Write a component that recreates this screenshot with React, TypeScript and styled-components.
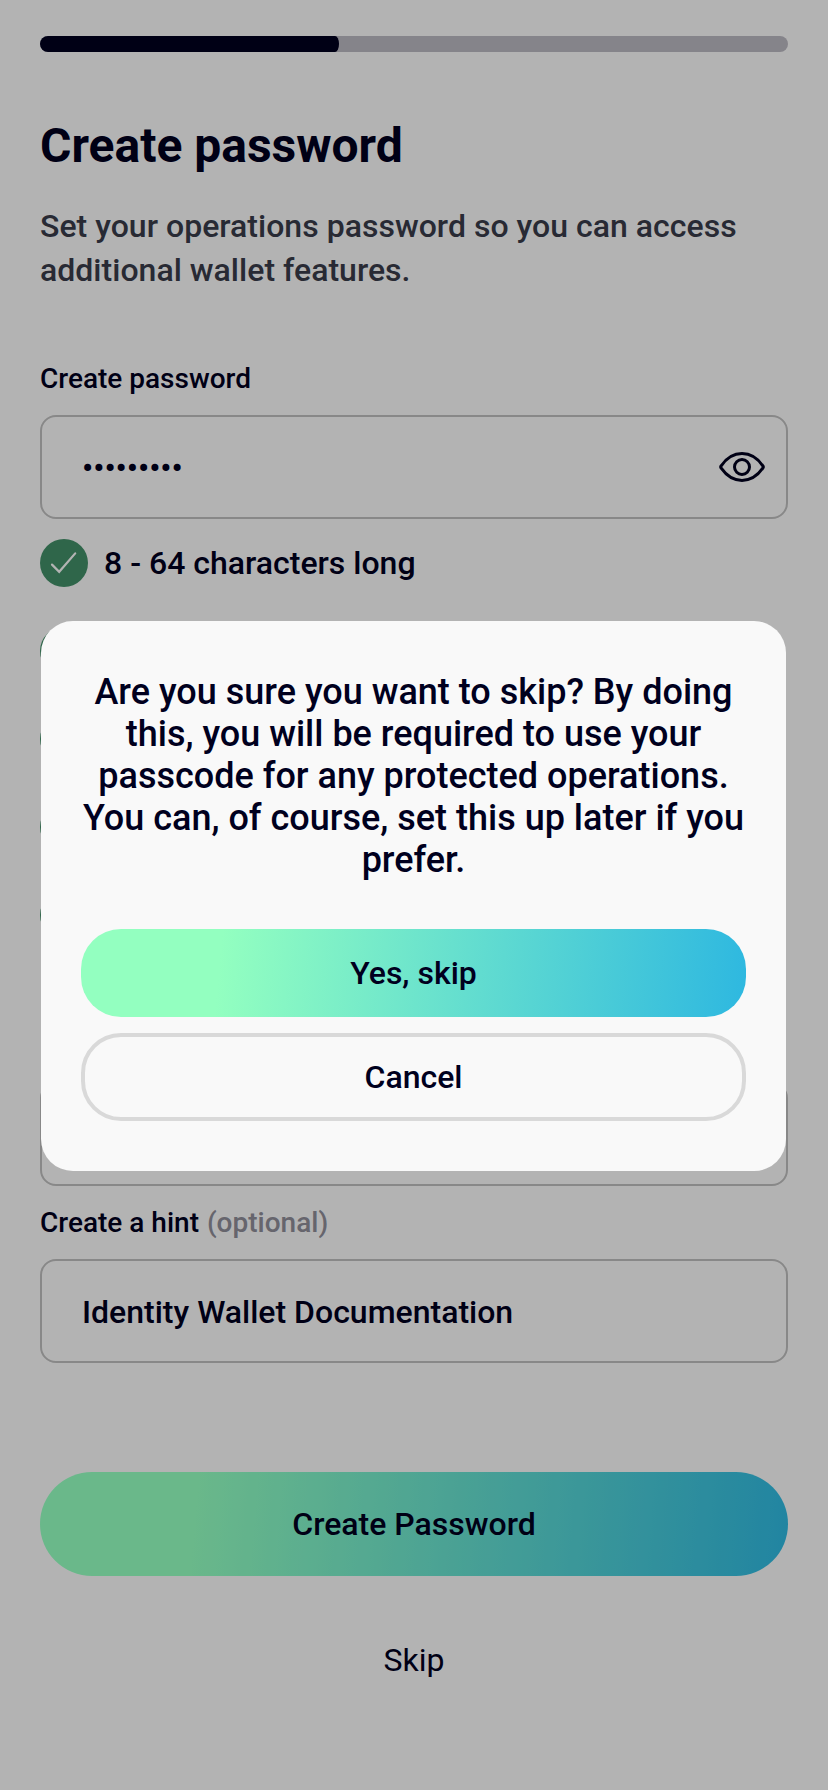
import React from 'react';
import styled, { createGlobalStyle } from 'styled-components';

const GlobalStyle = createGlobalStyle`
  *, *::before, *::after { box-sizing: border-box; }
  body { margin: 0; background: #f9f9f9; font-family: Roboto, "Liberation Sans", sans-serif; color: #00001e; }
  button { font-family: inherit; color: inherit; cursor: pointer; padding: 0; }
`;

const Screen = styled.main`
  height: 1790px;
  padding: 36px 40px 0;
  display: flex;
  flex-direction: column;
  overflow: hidden;
`;

const ProgressTrack = styled.div`
  height: 16px;
  flex-shrink: 0;
  border-radius: 8px;
  background: #b9b7c0;
  overflow: hidden;
`;

const ProgressFill = styled.div<{ $percent: number }>`
  width: ${(p) => p.$percent}%;
  height: 100%;
  border-radius: 0 4px 4px 0 / 0 8px 8px 0;
  background: #00001e;
`;

const Title = styled.h1`
  margin: 66px 0 0;
  font-size: 48px;
  line-height: 56px;
  font-weight: 700;
`;

const Subtitle = styled.p`
  margin: 30px 0 0;
  font-size: 32px;
  line-height: 44px;
  font-weight: 500;
  letter-spacing: 0.02px;
  color: #383b49;
`;

const Field = styled.div<{ $top: number }>`
  margin-top: ${(p) => p.$top}px;
  display: flex;
  flex-direction: column;
  gap: 20px;
`;

const Label = styled.label`
  min-height: 33px;
  font-size: 28px;
  line-height: 33px;
  font-weight: 500;
`;

const Optional = styled.span`
  margin-left: 1px;
  color: #8e8c97;
`;

const InputBox = styled.div`
  height: 104px;
  padding: 0 21px 0 40px;
  border: 2px solid #bdbdbd;
  border-radius: 16px;
  display: flex;
  align-items: center;
  justify-content: space-between;
  font-size: 32px;
  font-weight: 500;
`;

const InputValue = styled.span`
  padding-top: 2px;
`;

const Rules = styled.ul`
  list-style: none;
  margin: 20px 0 0;
  padding: 0;
  display: flex;
  flex-direction: column;
  gap: 40px;
`;

const Rule = styled.li`
  height: 48px;
  display: flex;
  align-items: center;
  gap: 16px;
  font-size: 32px;
  font-weight: 500;
`;

const PillButton = styled.button<{ $kind: 'primary' | 'outline'; $height: number }>`
  height: ${(p) => p.$height}px;
  flex-shrink: 0;
  border-radius: ${(p) => (p.$height > 90 ? 52 : 40)}px;
  border: ${(p) => (p.$kind === 'outline' ? '4px solid #d9d9d9' : 'none')};
  background: ${(p) =>
    p.$kind === 'primary'
      ? 'linear-gradient(95deg, #93ffc0 21%, #2eb8e0 100%)'
      : 'transparent'};
  font-size: 32px;
  font-weight: 500;
`;

const SubmitArea = styled.div`
  margin-top: 109px;
  display: flex;
  flex-direction: column;
`;

const SkipButton = styled.button`
  margin-top: 64px;
  align-self: center;
  border: none;
  background: none;
  font-size: 32px;
  line-height: 40px;
  font-weight: 400;
`;

const Overlay = styled.div`
  position: fixed;
  inset: 0;
  padding: 621px 42px 0 41px;
  background: rgba(0, 0, 0, 0.277);
`;

const Dialog = styled.section`
  height: 550px;
  padding: 50px 40px;
  border-radius: 32px;
  background: #f9f9f9;
  display: flex;
  flex-direction: column;
  justify-content: space-between;
`;

const Message = styled.p`
  margin: 0;
  text-align: center;
  font-size: 36px;
  line-height: 42px;
  font-weight: 500;
`;

const Actions = styled.div`
  display: flex;
  flex-direction: column;
  gap: 16px;
`;

const EyeIcon = () => (
  <svg width="46" height="32" viewBox="0 0 46 32" fill="none" stroke="#00001e" strokeWidth="3">
    <path d="M2.2 17.2Q1.2 16 2.2 14.8C7.5 7.2 14.5 2.6 23 2.6S38.5 7.2 43.8 14.8Q44.8 16 43.8 17.2C38.5 24.8 31.5 29.4 23 29.4S7.5 24.8 2.2 17.2Z" />
    <circle cx="23" cy="16" r="7.5" />
  </svg>
);

const CheckIcon = () => (
  <svg width="48" height="48" viewBox="0 0 48 48" fill="none">
    <circle cx="24" cy="24" r="24" fill="#428e67" />
    <path d="M12 25.6L19.2 32.8L35.2 14.4" stroke="#f9f9f9" strokeWidth="2.2" strokeLinecap="round" />
  </svg>
);

const rules = ['8 - 64 characters long', '', '', '', ''];

export default function App() {
  return (
    <>
      <GlobalStyle />
      <Screen>
        <ProgressTrack>
          <ProgressFill $percent={40} />
        </ProgressTrack>
        <Title>Create password</Title>
        <Subtitle>Set your operations password so you can access additional wallet features.</Subtitle>
        <Field $top={70}>
          <Label>Create password</Label>
          <InputBox>
            <InputValue>•••••••••</InputValue>
            <EyeIcon />
          </InputBox>
        </Field>
        <Rules>
          {rules.map((rule, index) => (
            <Rule key={index}>
              <CheckIcon />
              {rule}
            </Rule>
          ))}
        </Rules>
        <Field $top={90}>
          <Label />
          <InputBox />
        </Field>
        <Field $top={20}>
          <Label>
            Create a hint <Optional>(optional)</Optional>
          </Label>
          <InputBox>
            <InputValue>Identity Wallet Documentation</InputValue>
          </InputBox>
        </Field>
        <SubmitArea>
          <PillButton $kind="primary" $height={104}>Create Password</PillButton>
          <SkipButton>Skip</SkipButton>
        </SubmitArea>
      </Screen>
      <Overlay>
        <Dialog role="dialog" aria-modal="true">
          <Message>
            Are you sure you want to skip? By doing this, you will be required to use your passcode for any
            protected operations. You can, of course, set this up later if you prefer.
          </Message>
          <Actions>
            <PillButton $kind="primary" $height={88}>Yes, skip</PillButton>
            <PillButton $kind="outline" $height={88}>Cancel</PillButton>
          </Actions>
        </Dialog>
      </Overlay>
    </>
  );
}
